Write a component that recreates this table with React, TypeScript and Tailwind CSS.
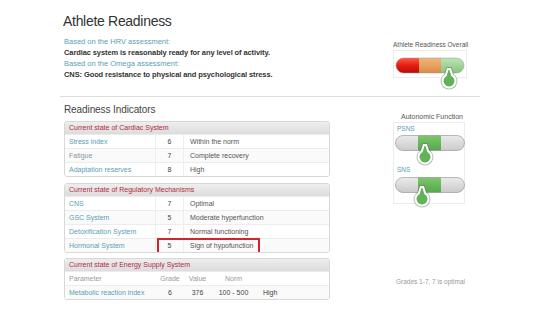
import React from 'react';

const link = 'text-[#5a9eb8]';

function Pin({ cx, cy }: { cx: number; cy: number }) {
  const d = `M${cx - 1.2},${cy - 12} L${cx + 1.2},${cy - 12} L${cx + 3.2},${cy - 5.6} A6.5,6.5 0 1 1 ${cx - 3.2},${cy - 5.6} Z`;
  return (
    <g>
      <path d={d} fill="none" stroke="#5f6b5f" strokeWidth={4} opacity={0.45} />
      <path d={d} fill="#62b257" stroke="#ffffff" strokeWidth={2} />
    </g>
  );
}

function OverallGauge() {
  return (
    <svg width="74" height="28" className="overflow-visible">
      <defs>
        <linearGradient id="gRed" x1="0" y1="0" x2="0" y2="1">
          <stop offset="0" stopColor="#ff5a44" />
          <stop offset="0.5" stopColor="#e61d12" />
          <stop offset="1" stopColor="#b80d0a" />
        </linearGradient>
        <linearGradient id="gOrange" x1="0" y1="0" x2="0" y2="1">
          <stop offset="0" stopColor="#f2b57a" />
          <stop offset="1" stopColor="#d98c4a" />
        </linearGradient>
        <linearGradient id="gGreen" x1="0" y1="0" x2="0" y2="1">
          <stop offset="0" stopColor="#bfe4b6" />
          <stop offset="1" stopColor="#86c47c" />
        </linearGradient>
        <clipPath id="overallClip">
          <rect x="2" y="7" width="68" height="15" rx="7.5" />
        </clipPath>
      </defs>
      <g clipPath="url(#overallClip)">
        <rect x="2" y="7" width="23" height="15" fill="url(#gRed)" />
        <rect x="25" y="7" width="22" height="15" fill="url(#gOrange)" />
        <rect x="47" y="7" width="23" height="15" fill="url(#gGreen)" />
      </g>
      <rect x="2" y="7" width="68" height="15" rx="7.5" fill="none" stroke="#9a9a9a" strokeOpacity={0.5} />
      <Pin cx={55} cy={30} />
    </svg>
  );
}

function BalanceGauge({ id, pin }: { id: string; pin: number }) {
  return (
    <svg width="70" height="16" className="overflow-visible">
      <defs>
        <linearGradient id={`${id}Gray`} x1="0" y1="0" x2="0" y2="1">
          <stop offset="0" stopColor="#ececec" />
          <stop offset="1" stopColor="#c9c9c9" />
        </linearGradient>
        <linearGradient id={`${id}Green`} x1="0" y1="0" x2="0" y2="1">
          <stop offset="0" stopColor="#7cc96c" />
          <stop offset="1" stopColor="#57a64b" />
        </linearGradient>
        <clipPath id={`${id}Clip`}>
          <rect x="0.5" y="0.5" width="69" height="15" rx="7.5" />
        </clipPath>
      </defs>
      <g clipPath={`url(#${id}Clip)`}>
        <rect x="0" y="0" width="70" height="16" fill={`url(#${id}Gray)`} />
        <rect x="23" y="0" width="23" height="16" fill={`url(#${id}Green)`} />
      </g>
      <rect x="0.5" y="0.5" width="69" height="15" rx="7.5" fill="none" stroke="#8f8f8f" strokeOpacity={0.6} />
      <Pin cx={pin} cy={22} />
    </svg>
  );
}

function Panel({ title, children }: { title: string; children: React.ReactNode }) {
  return (
    <div className="rounded-[3px] border border-[#d8d8d8] overflow-hidden">
      <div className="h-[12px] leading-[12px] px-[4px] bg-linear-to-b from-[#eeeeee] to-[#dcdcdc] text-[#b52a40]">{title}</div>
      {children}
    </div>
  );
}

function Row({ name, grade, text, muted, alt, mark }: { name: string; grade: string; text: string; muted?: boolean; alt?: boolean; mark?: boolean }) {
  return (
    <div className={`relative flex h-[14px] items-center border-t border-[#ececec] ${alt ? 'bg-[#fafafa]' : 'bg-white'}`}>
      <div className={`w-[91px] h-full leading-[13px] pl-[4px] border-r border-[#eeeeee] ${muted ? 'text-[#8a969c]' : link}`}>{name}</div>
      <div className="w-[28px] h-full leading-[13px] text-center text-[#444] border-r border-[#eeeeee]">{grade}</div>
      <div className="flex-1 leading-[13px] pl-[6px] text-[#555]">{text}</div>
      {mark && <div className="absolute left-[92px] top-[-1px] w-[103px] h-[17px] border-2 border-[#d2232f]" />}
    </div>
  );
}

export default function App() {
  return (
    <div className="w-[540px] h-[321px] bg-white overflow-hidden font-['Liberation_Sans',Arial,sans-serif]">
      <div className="ml-[60px] w-[420px]">
        <div className="flex justify-between h-[97px] pt-[12px] border-b border-[#dedede]">
          <div className="pl-[3px]">
            <h1 className="text-[14px] leading-[18px] text-[#333] tracking-[-0.3px]">Athlete Readiness</h1>
            <div className="mt-[6px] pl-[1px] text-[7.5px] leading-[11px]">
              <div className={link}>Based on the HRV assessment:</div>
              <div className="font-bold text-[#333] tracking-[-0.1px]">Cardiac system is reasonably ready for any level of activity.</div>
              <div className={link}>Based on the Omega assessment:</div>
              <div className="font-bold text-[#333] tracking-[-0.1px]">CNS: Good resistance to physical and psychological stress.</div>
            </div>
          </div>
          <div className="w-[75px] mr-[12px] pt-[29px]">
            <div className="text-[6.5px] leading-[8px] text-[#555] text-center whitespace-nowrap">Athlete Readiness Overall</div>
            <div className="mt-[1px] w-[74px] h-[28px] border border-[#ececec]">
              <OverallGauge />
            </div>
          </div>
        </div>

        <div className="flex justify-between">
          <div className="w-[270px] pl-[4px] text-[7px]">
            <div className="mt-[6px] mb-[5px] text-[10px] leading-[13px] text-[#444] tracking-[-0.1px]">Readiness Indicators</div>
            <Panel title="Current state of Cardiac System">
              <Row name="Stress index" grade="6" text="Within the norm" />
              <Row name="Fatigue" grade="7" text="Complete recovery" muted alt />
              <Row name="Adaptation reserves" grade="8" text="High" />
            </Panel>
            <div className="mt-[6px]">
              <Panel title="Current state of Regulatory Mechanisms">
                <Row name="CNS" grade="7" text="Optimal" />
                <Row name="GSC System" grade="5" text="Moderate hyperfunction" alt />
                <Row name="Detoxification System" grade="7" text="Normal functioning" />
                <Row name="Hormonal System" grade="5" text="Sign of hypofunction" alt mark />
              </Panel>
            </div>
            <div className="mt-[5px]">
              <Panel title="Current state of Energy Supply System">
                <div className="flex h-[14px] leading-[13px] items-center border-t border-[#ececec] text-[#9a9a9a]">
                  <div className="w-[91px] pl-[4px]">Parameter</div>
                  <div className="w-[28px] text-center">Grade</div>
                  <div className="w-[27px] text-center">Value</div>
                  <div className="w-[45px] text-center">Norm</div>
                </div>
                <div className="flex h-[14px] leading-[13px] items-center border-t border-[#ececec] bg-[#fafafa]">
                  <div className={`w-[91px] pl-[4px] ${link}`}>Metabolic reaction index</div>
                  <div className="w-[28px] text-center text-[#444]">6</div>
                  <div className="w-[27px] text-center text-[#444]">376</div>
                  <div className="w-[45px] text-center text-[#444]">100 - 500</div>
                  <div className="flex-1 pl-[7px] text-[#444]">High</div>
                </div>
              </Panel>
            </div>
          </div>

          <div className="w-[75px] mr-[12px] pt-[16px]">
            <div className="text-[7px] leading-[8px] text-[#555] text-center whitespace-nowrap pl-[3px]">Autonomic Function</div>
            <div className="mt-[1px] w-[72px] h-[82px] border border-[#ececec] pl-[1px] pt-[2px]">
              <div className={`text-[6.5px] leading-[8px] pl-[2px] ${link}`}>PSNS</div>
              <div className="mt-[2px]">
                <BalanceGauge id="psns" pin={30} />
              </div>
              <div className={`mt-[15px] text-[6.5px] leading-[8px] pl-[2px] ${link}`}>SNS</div>
              <div className="mt-[3px]">
                <BalanceGauge id="sns" pin={27} />
              </div>
            </div>
            <div className="mt-[74px] text-[6.5px] leading-[8px] text-[#9a9a9a] text-center whitespace-nowrap">Grades 1-7, 7 is optimal</div>
          </div>
        </div>
      </div>
    </div>
  );
}
